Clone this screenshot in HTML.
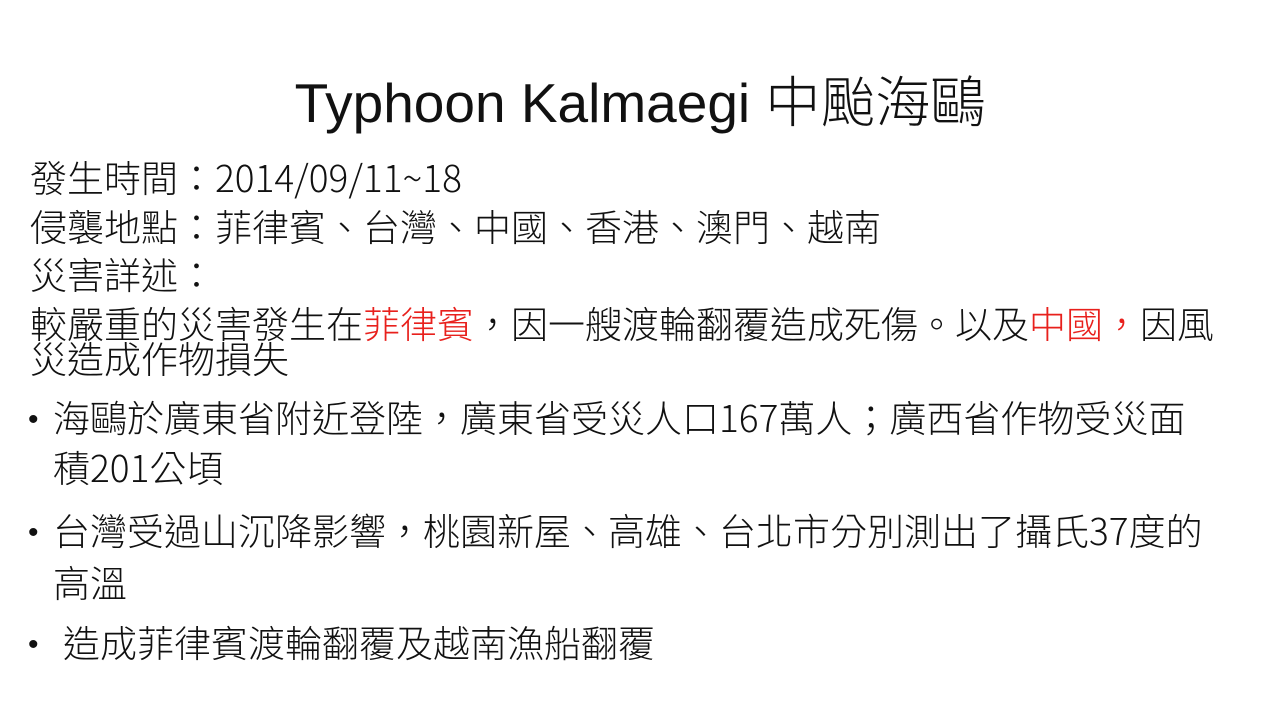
<!DOCTYPE html>
<html><head><meta charset="utf-8"><style>
body{margin:0;width:1280px;height:720px;background:#fff;position:relative;overflow:hidden;font-family:"Noto Sans CJK TC",sans-serif;color:#111;font-weight:300}
.l{position:absolute;white-space:nowrap;font-size:37px;line-height:37px}
.r{color:#e8201c}
.b{position:absolute;font-size:30px;line-height:37px;left:28px;font-family:"Liberation Sans",sans-serif}
</style></head><body>
<div class="l" style="left:0;width:1280px;text-align:center;top:74px;font-size:55px;line-height:58px;font-family:'Liberation Sans','Noto Sans CJK TC',sans-serif">Typhoon Kalmaegi 中颱海鷗</div>
<div class="l" style="left:30px;top:158px">發生時間：2014/09/11~18</div>
<div class="l" style="left:30px;top:207px">侵襲地點：菲律賓、台灣、中國、香港、澳門、越南</div>
<div class="l" style="left:30px;top:255px">災害詳述：</div>
<div class="l" style="left:30px;top:304px">較嚴重的災害發生在<span class="r">菲律賓</span>，因一艘渡輪翻覆造成死傷。以及<span class="r">中國，</span>因風</div>
<div class="l" style="left:30px;top:339px">災造成作物損失</div>
<div class="b" style="top:401px">•</div>
<div class="l" style="left:53px;top:398px">海鷗於廣東省附近登陸，廣東省受災人口167萬人；廣西省作物受災面</div>
<div class="l" style="left:53px;top:448px">積201公頃</div>
<div class="b" style="top:514px">•</div>
<div class="l" style="left:53px;top:511px">台灣受過山沉降影響，桃園新屋、高雄、台北市分別測出了攝氏37度的</div>
<div class="l" style="left:53px;top:563px">高溫</div>
<div class="b" style="top:626px">•</div>
<div class="l" style="left:63px;top:623px">造成菲律賓渡輪翻覆及越南漁船翻覆</div>
</body></html>
